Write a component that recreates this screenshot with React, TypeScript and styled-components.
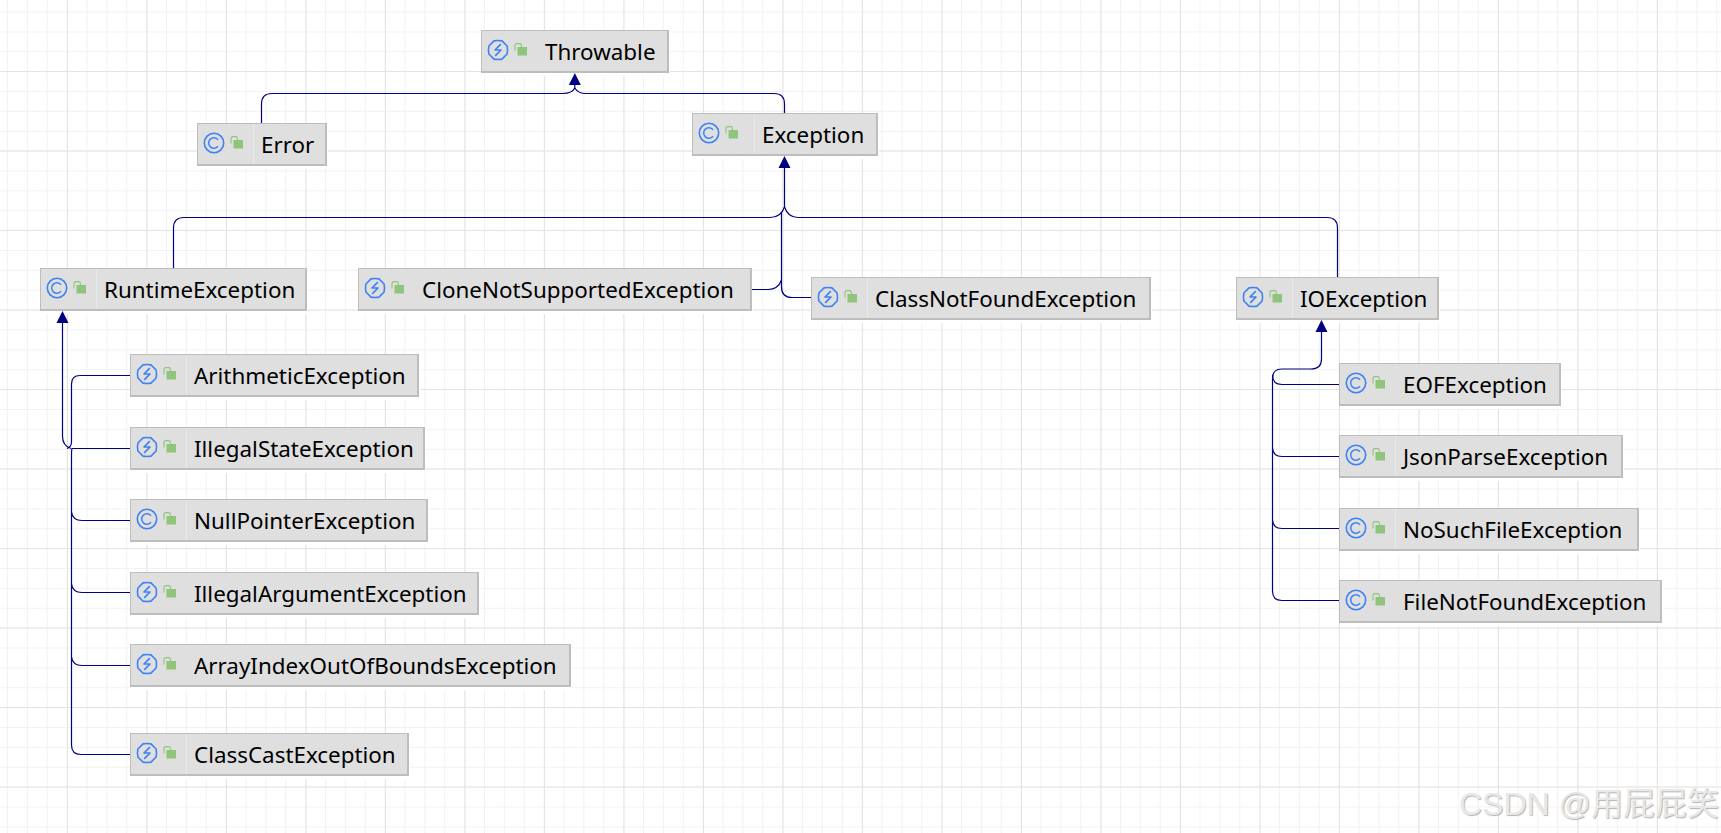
import React from 'react';
import styled, { createGlobalStyle } from 'styled-components';

const GlobalStyle = createGlobalStyle`
  html, body {
    margin: 0;
    padding: 0;
    background: #fff;
  }
`;

const Canvas = styled.div`
  position: relative;
  width: 1721px;
  height: 833px;
  overflow: hidden;
  background-color: #fff;
  background-image:
    linear-gradient(to right, #e4e4e4 1px, transparent 1px),
    linear-gradient(to bottom, #e4e4e4 1px, transparent 1px),
    linear-gradient(to right, #f2f2f2 1px, transparent 1px),
    linear-gradient(to bottom, #f2f2f2 1px, transparent 1px);
  background-size: 79.5px 79.5px, 79.5px 79.5px, 19.875px 19.875px, 19.875px 19.875px;
  background-position: 67px 0, 0 71px, 7px 0, 0 11.5px;
`;

const Edges = styled.svg`
  position: absolute;
  inset: 0;
  width: 1721px;
  height: 833px;
  z-index: 2;
`;

const Node = styled.div<{ $x: number; $y: number; $w: number; $h: number }>`
  position: absolute;
  left: ${(p) => p.$x}px;
  top: ${(p) => p.$y}px;
  width: ${(p) => p.$w}px;
  height: ${(p) => p.$h}px;
  box-sizing: border-box;
  display: flex;
  align-items: stretch;
  background: #dfdfdf;
  border: solid #bdbdbd;
  border-width: 1px 2px 2px 1px;
  box-shadow: 1px 3px 0 #fff;
  z-index: 1;
`;

const IconCell = styled.div<{ $divider: boolean; $width: number }>`
  width: ${(p) => p.$width}px;
  flex: none;
  box-sizing: border-box;
  display: flex;
  align-items: center;
  gap: 5px;
  padding: 0 0 3px 5px;
  border-right: 1px solid ${(p) => (p.$divider ? '#e9e9e9' : 'transparent')};
`;

const Label = styled.span`
  padding-left: 7px;
  font-family: "Noto Sans", "Open Sans", sans-serif;
  font-size: 22.4px;
  line-height: 42px;
  color: #000;
  white-space: nowrap;
`;

const Watermark = styled.div`
  position: absolute;
  left: 1459px;
  top: 784px;
  z-index: 3;
  font-family: "Liberation Sans", "Noto Sans CJK SC", sans-serif;
  font-size: 32px;
  line-height: 40px;
  color: #e8e8e8;
  text-shadow: 1px 1px 1px #b4b4b4;
  white-space: nowrap;
`;

const BLUE = '#3f82f4';
const NAVY = '#000080';
const GREEN = '#8fc47b';

const ClassIcon = () => (
  <svg width="22" height="22" viewBox="0 0 22 22" fill="none">
    <circle cx="11" cy="11" r="9.7" stroke={BLUE} strokeWidth="1.6" />
    <path d="M15 7.8A5.2 5.2 0 1 0 15 14.2" stroke={BLUE} strokeWidth="1.5" />
  </svg>
);

const ThrowIcon = () => (
  <svg width="22" height="22" viewBox="0 0 22 22" fill="none">
    <path
      d="M7 1.9Q11 1 15 1.9L20.1 7Q21 11 20.1 15L15 20.1Q11 21 7 20.1L1.9 15Q1 11 1.9 7Z"
      stroke={BLUE}
      strokeWidth="1.6"
      strokeLinejoin="round"
    />
    <path
      d="M13.8 5.2 8 11h6l-5.8 5.8"
      stroke={BLUE}
      strokeWidth="1.7"
      strokeLinejoin="round"
    />
  </svg>
);

const LockIcon = () => (
  <svg width="13" height="13" viewBox="0 0 13 13" fill="none">
    <path d="M1 7.5V2.4Q1 .6 2.8 .6H5.6Q7.4 .6 7.4 2.4V4" stroke={GREEN} strokeWidth="1.1" />
    <rect x="3.5" y="4" width="9.5" height="8.5" fill={GREEN} />
  </svg>
);

type NodeData = {
  name: string;
  x: number;
  y: number;
  w: number;
  kind: 'class' | 'throw';
  divider?: boolean;
  cell?: number;
};

const nodes: NodeData[] = [
  { name: 'Throwable', x: 481, y: 30, w: 188, kind: 'throw' },
  { name: 'Error', x: 197, y: 123, w: 130, kind: 'class', divider: true },
  { name: 'Exception', x: 692, y: 113, w: 186, kind: 'class', divider: true, cell: 62 },
  { name: 'RuntimeException', x: 40, y: 268, w: 267, kind: 'class', divider: true },
  { name: 'CloneNotSupportedException', x: 358, y: 268, w: 394, kind: 'throw' },
  { name: 'ClassNotFoundException', x: 811, y: 277, w: 340, kind: 'throw', divider: true },
  { name: 'IOException', x: 1236, y: 277, w: 203, kind: 'throw', divider: true },
  { name: 'ArithmeticException', x: 130, y: 354, w: 289, kind: 'throw', divider: true },
  { name: 'IllegalStateException', x: 130, y: 427, w: 295, kind: 'throw', divider: true },
  { name: 'NullPointerException', x: 130, y: 499, w: 298, kind: 'class', divider: true },
  { name: 'IllegalArgumentException', x: 130, y: 572, w: 349, kind: 'throw' },
  { name: 'ArrayIndexOutOfBoundsException', x: 130, y: 644, w: 441, kind: 'throw' },
  { name: 'ClassCastException', x: 130, y: 733, w: 279, kind: 'throw', divider: true },
  { name: 'EOFException', x: 1339, y: 363, w: 222, kind: 'class' },
  { name: 'JsonParseException', x: 1339, y: 435, w: 284, kind: 'class', divider: true },
  { name: 'NoSuchFileException', x: 1339, y: 508, w: 300, kind: 'class', divider: true },
  { name: 'FileNotFoundException', x: 1339, y: 580, w: 323, kind: 'class' },
];

// hand routed connectors, IntelliJ style rounded corners
const lines = [
  // Throwable
  'M261.5 123V104Q261.5 93.5 272 93.5H563Q572 93.5 574.8 88',
  'M784.5 113V104Q784.5 93.5 774 93.5H586Q578 93.5 574.8 88',
  'M574.8 84V89',
  // Exception
  'M784.5 166V208',
  'M173.5 268V228Q173.5 217.5 184 217.5H770Q781 217.5 784.5 207',
  'M1337.5 277V228Q1337.5 217.5 1327 217.5H798Q788 217.5 784.5 207',
  'M752 289.5H768Q778 289.5 781.5 280V213',
  'M811 297.5H792Q781.5 297.5 781.5 287V280',
  // RuntimeException
  'M62.5 321V436Q62.5 446 71 448.5',
  'M130 375.5H80Q71.5 375.5 71.5 384V442Q71.5 447 67 448.5',
  'M130 448.5H72Q71.5 450 71.5 456',
  'M71.5 456V745Q71.5 754.5 81 754.5H130',
  'M71.5 512Q72.5 520.5 82 520.5H130',
  'M71.5 584Q72.5 592.5 82 592.5H130',
  'M71.5 657Q72.5 665.5 82 665.5H130',
  // IOException
  'M1321.5 330V359Q1321.5 369 1311 369H1282Q1272.5 369 1272.5 378V591Q1272.5 600.5 1282 600.5H1339',
  'M1272.5 375Q1272.5 384.5 1282 384.5H1339',
  'M1272.5 448Q1273 456.5 1282 456.5H1339',
  'M1272.5 520Q1273 528.5 1282 528.5H1339',
];

const arrows = [
  [574.8, 73],
  [784.5, 156],
  [62.5, 311],
  [1321.5, 320],
];

const App: React.FC = () => (
  <>
    <GlobalStyle />
    <Canvas>
      {nodes.map((n) => (
        <Node key={n.name} $x={n.x} $y={n.y} $w={n.w} $h={43}>
          <IconCell $divider={!!n.divider} $width={n.cell ?? 56}>
            {n.kind === 'class' ? <ClassIcon /> : <ThrowIcon />}
            <LockIcon />
          </IconCell>
          <Label>{n.name}</Label>
        </Node>
      ))}
      <Edges viewBox="0 0 1721 833" fill="none">
        {lines.map((d) => (
          <path key={d} d={d} stroke={NAVY} strokeWidth="1.2" />
        ))}
        {arrows.map(([x, y]) => (
          <polygon key={x} points={`${x},${y} ${x + 6},${y + 12} ${x - 6},${y + 12}`} fill={NAVY} />
        ))}
      </Edges>
      <Watermark>CSDN @用屁屁笑</Watermark>
    </Canvas>
  </>
);

export default App;
